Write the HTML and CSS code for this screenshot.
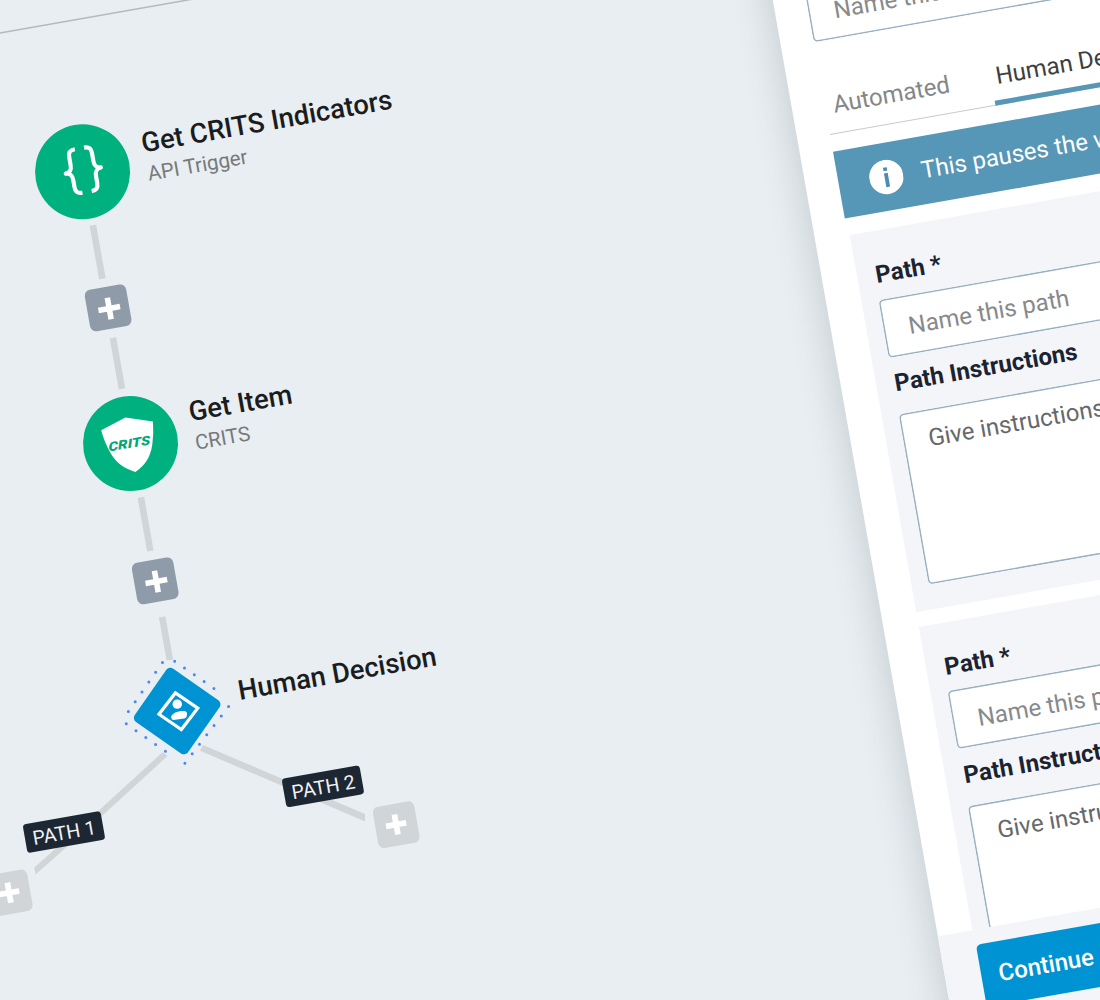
FILE: index.html
```html
<!DOCTYPE html>
<html lang="en">
<head>
<meta charset="utf-8">
<title>Workflow editor</title>
<link rel="stylesheet" href="styles.css">
</head>
<body>
<main class="stage">
  <section class="canvas">
    <svg class="wires" width="961" height="1220" viewBox="-200 0 961 1220">
      <path class="rule" d="M-200 32.6H761"/>
      <path class="wire" d="M52.4 238V292.3M52.6 352.4V404.2M52.4 514.3V568.7M52.6 635.6V679.5"/>
      <g class="branch" transform="rotate(10)">
        <path d="M162.5 752.3L167.5 756L106 812.3L35.5 874.5L34.3 867.5L98.3 811Z"/>
        <path d="M203 745L365 814V821.5L200 750.7Z"/>
      </g>
    </svg>

    <div class="node trigger">
      <svg class="disc" viewBox="-48 -48 96 96">
        <g class="braces" transform="translate(.5 -1.6) scale(.91)">
          <path d="M-5 -24.5C-11 -24.5 -12.6 -22 -12.6 -17V-8.5C-12.6 -3 -14 -.3 -19.5 .2C-14 .7 -12.6 3.4 -12.6 9V16.5C-12.6 21.5 -11 24.2 -5 24.2"/>
          <path d="M5.3 -24.5C11.3 -24.5 12.9 -22 12.9 -17V-8.5C12.9 -3 14.3 -.3 19.800 .2C14.3 .7 12.9 3.4 12.9 9V16.5C12.9 21.5 11.3 24.2 5.3 24.2"/>
        </g>
      </svg>
      <div class="caption"><h2>Get CRITS Indicators</h2><p>API Trigger</p></div>
    </div>

    <div class="node item">
      <svg class="disc" viewBox="-48 -48 96 96">
        <g transform="rotate(10) translate(-130.5 -443.5)">
          <path class="shield" d="M125 417L152.700 421Q153.600 434 152 444.500C150 457.500 144.500 465.500 135 471.700C124 468.500 116.500 463.500 110.500 453.500Q104 442.500 100.700 430Z"/>
          <text class="brand" transform="translate(108.3 451.2) rotate(-9.7) skewX(-6)" textLength="42.5" lengthAdjust="spacingAndGlyphs">CRITS</text>
        </g>
      </svg>
      <div class="caption"><h2>Get Item</h2><p>CRITS</p></div>
    </div>

    <div class="node decision">
      <svg class="diamond" viewBox="-56 -56 112 112">
        <g transform="rotate(45)">
          <rect class="tile" x="-32.5" y="-32.5" width="65" height="65" rx="5"/>
        </g>
        <g transform="rotate(10) translate(-177.3 -711.3)">
          <path class="frame" d="M175.500 693.200L197.900 708.500L181.500 729.800L159.100 714.500Z"/>
          <circle class="person" cx="177.4" cy="704.4" r="4.7"/>
          <path class="person" d="M171.2 717C172.500 713 178 710.800 184.500 711.200C187.300 711.400 187.900 714.500 186.300 717.500Q185.700 718.600 184.300 718.800L173.600 720.300Q171.700 720.300 171.200 717Z"/>
          <g class="dots">
            <path d="M174.800 661.400L223.800 695.400"/>
            <path d="M162.600 662.700L128.400 711.900"/>
            <path d="M126.400 724.100L134.700 730L174.100 757.500"/>
            <path d="M228.700 706.700L184.700 764"/>
          </g>
        </g>
      </svg>
      <div class="caption"><h2>Human Decision</h2></div>
    </div>

    <div class="add add-1"><svg viewBox="0 0 42 42"><path d="M22 10.800v22M11 21.800h22"/></svg></div>
    <div class="add add-2"><svg viewBox="0 0 42 42"><path d="M22 10.800v22M11 21.800h22"/></svg></div>
    <div class="add off add-3"><svg viewBox="0 0 42 42"><path d="M21 10.500v20.500M10.700 20.800h20.500"/></svg></div>
    <div class="add off add-4"><svg viewBox="0 0 42 42"><path d="M21 10.500v20.500M10.700 20.800h20.500"/></svg></div>
    <span class="tag tag-1">PATH 1</span>
    <span class="tag tag-2">PATH 2</span>
  </section>

  <aside class="panel">
    <div class="head">
      <div class="field name">Name this step</div>
      <nav class="tabs">
        <span class="tab">Automated</span>
        <span class="tab active">Human Decision</span>
      </nav>
      <div class="notice">
        <svg class="info" viewBox="0 0 34.4 34.4"><circle cx="17.2" cy="17.2" r="17.2"/><path d="M15.400 13.300h3.800v14h-3.800zM15.400 7.600h3.800v3.400h-3.800z"/></svg>
        <span>This pauses the workflow</span>
      </div>
    </div>
    <div class="paths">
      <div class="card">
        <label>Path *</label>
        <div class="field">Name this path</div>
        <label class="second">Path Instructions</label>
        <div class="field area">Give instructions for this path</div>
      </div>
      <div class="card">
        <label>Path *</label>
        <div class="field">Name this path</div>
        <label class="second">Path Instructions</label>
        <div class="field area">Give instructions for this path</div>
      </div>
    </div>
    <footer class="foot"><button class="primary">Continue</button></footer>
  </aside>
</main>
</body>
</html>
```
FILE: styles.css
```css
* { box-sizing: border-box; }
html, body { height: 100%; overflow: hidden; }
body {
  margin: 0;
  background: #e8eef1;
  font: 400 24px/28px Roboto, "Liberation Sans", sans-serif;
}
h2, p { margin: 0; }

.stage {
  display: grid;
  grid-template-columns: 961px 400px;
  grid-template-rows: 1220px;
  width: 1361px;
  height: 1220px;
  margin-left: -200px;
  transform: rotate(-10deg);
  transform-origin: 200px 0;
}

/* Workflow canvas */
.canvas { position: relative; }
.wires { position: absolute; left: 0; top: 0; }
.rule { stroke: #b3b9bd; stroke-width: 1.5; }
.wire { stroke: #d1d5d8; stroke-width: 6.6; }
.branch { fill: #d1d5d8; }

.node { position: absolute; display: flex; align-items: flex-start; white-space: nowrap; }
.trigger { left: 203.6px; top: 135.6px; }
.item { left: 203.6px; top: 411.8px; }
.decision { left: 195.1px; top: 675.3px; }
.disc { flex: none; width: 95.6px; height: 95.6px; border-radius: 50%; background: #00b180; overflow: visible; }
.braces path { fill: none; stroke: #fff; stroke-width: 4.6; stroke-linejoin: round; }
.shield { fill: #fff; }
.brand { font: italic 900 12.6px Roboto, sans-serif; fill: #00a878; }
.caption { display: flex; flex-direction: column; gap: 3px; }
.caption h2 { font-size: 27.4px; line-height: 32px; font-weight: 500; color: #1b1c1e; }
.caption p { font-size: 20.5px; line-height: 24px; color: #77797b; padding-left: 1px; }
.trigger .caption { padding: 14.7px 0 0 15.2px; }
.item .caption { padding: 11.2px 0 0 15.2px; }
.decision .caption { padding: 31px 0 0 7.5px; }

.diamond { flex: none; width: 112px; height: 112px; overflow: visible; }
.tile { fill: #0093d3; }
.frame { fill: none; stroke: #fff; stroke-width: 3.2; }
.person { fill: #fff; }
.dots path { fill: none; stroke: #4a86f7; stroke-width: 3; stroke-linecap: round; stroke-dasharray: 0 11.95; }

.add { position: absolute; width: 42px; height: 42px; border-radius: 6px; background: #8f9ba8; }
.add svg { display: block; width: 42px; height: 42px; }
.add path { fill: none; stroke: #fff; stroke-width: 5.6; }
.add.off { background: #d1d5d8; }
.add.off path { stroke-width: 5.8; }
.add-1 { left: 231.6px; top: 301.3px; }
.add-2 { left: 231.4px; top: 577.6px; }
.add-3 { left: 33.4px; top: 860px; }
.add-4 { left: 425.6px; top: 860px; }

.tag {
  position: absolute;
  width: 79px;
  height: 28.6px;
  border-radius: 3.5px;
  background: #1d2733;
  color: #f0f2f4;
  font-size: 19.5px;
  line-height: 31px;
  text-align: center;
}
.tag-1 { left: 79.1px; top: 816.2px; }
.tag-2 { left: 342.3px; top: 816.2px; }

/* Step settings panel */
.panel {
  display: flex;
  flex-direction: column;
  background: #fff;
  box-shadow: -4px 0 34px rgba(90, 105, 115, .24);
  white-space: nowrap;
}
.head { padding: 124px 0 0 33px; }
.field {
  height: 59px;
  padding: 17.8px 0 0 25.4px;
  border-radius: 5px;
  background: #fff;
  box-shadow: inset 0 0 0 1.6px #9ab1c2;
  color: #87898b;
}
.field.name { padding-top: 17px; }
.tabs {
  display: flex;
  align-items: flex-end;
  gap: 42px;
  height: 93.8px;
  background: linear-gradient(#c6cbcd, #c6cbcd) left bottom / 100% 1.3px no-repeat;
}
.tab { padding: 0 0 15.3px 8.2px; color: #848688; }
.tab.active {
  flex: 1;
  padding-left: 5px;
  padding-bottom: 10.3px;
  border-bottom: 5px solid #5696b7;
  color: #3c3e41;
}
.notice {
  display: flex;
  align-items: center;
  gap: 18.8px;
  height: 68px;
  margin-top: 17.6px;
  padding-left: 30.6px;
  background: #5696b7;
  color: #fff;
}
.info { flex: none; width: 34.4px; height: 34.4px; }
.info circle { fill: #fff; }
.info path { fill: #4a8db0; }
.paths {
  display: flex;
  flex-direction: column;
  flex: 1;
  gap: 14.6px;
  min-height: 0;
  margin-top: 16.8px;
  padding-left: 35.4px;
  overflow: hidden;
}
.card { flex: none; height: 383.2px; padding: 30px 0 0 16.5px; background: #f3f5f9; }
.card label { display: block; padding-left: 1.6px; font-weight: 700; color: #1b2330; }
.card .field { margin-top: 10.4px; }
.card .second { margin-top: 12.8px; }
.card .area { height: 173px; margin-top: 16.6px; padding-top: 15px; color: #66686b; }
.foot { flex: none; height: 135.4px; padding: 15px 0 0 36.1px; background: #f3f5f9; }
.primary {
  display: block;
  width: 250px;
  height: 63.6px;
  padding: 2px 0 0 17.4px;
  border: 0;
  border-radius: 5px;
  background: #0093d3;
  color: #fff;
  font: 500 24px/28px Roboto, sans-serif;
  text-align: left;
}
```
